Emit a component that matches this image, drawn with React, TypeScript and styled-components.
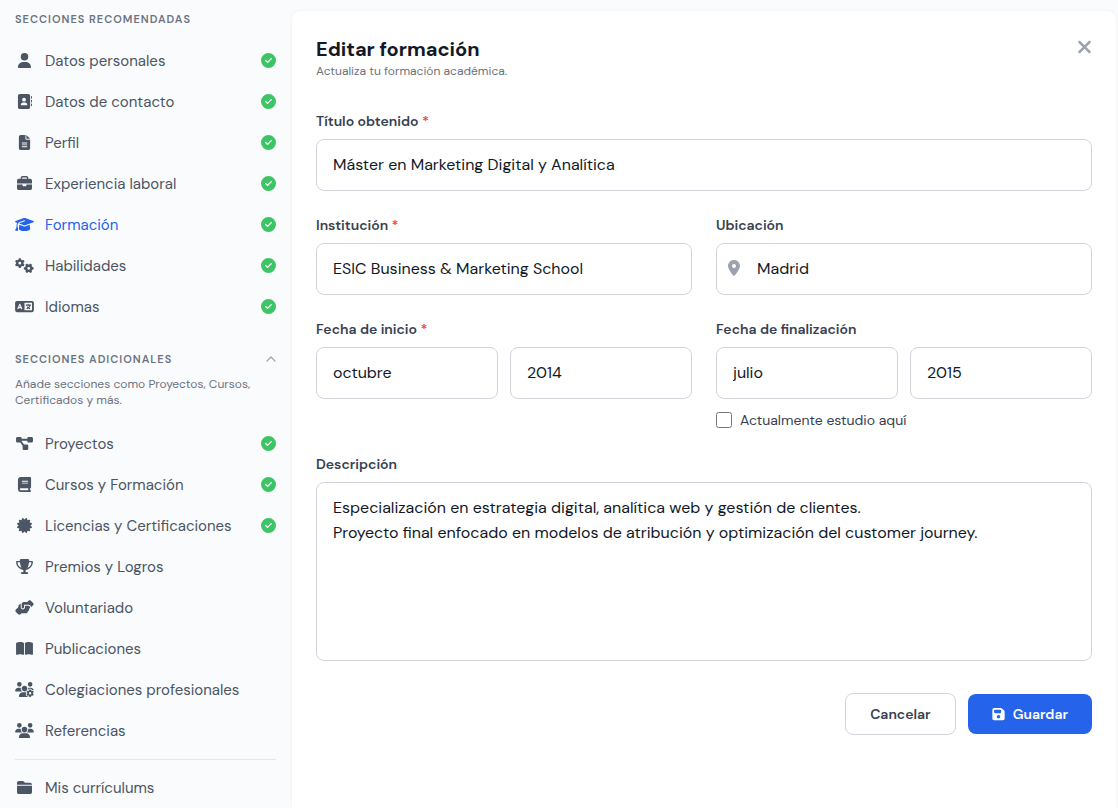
import React, { useState } from "react";
import styled, { createGlobalStyle } from "styled-components";
import type { IconType } from "react-icons";
import {
  FaUser,
  FaAddressBook,
  FaFileLines,
  FaBriefcase,
  FaGraduationCap,
  FaGears,
  FaLanguage,
  FaDiagramProject,
  FaBook,
  FaCertificate,
  FaTrophy,
  FaHandshakeAngle,
  FaBookOpen,
  FaUsersGear,
  FaUsers,
  FaFolderClosed,
  FaCircleCheck,
  FaLocationDot,
  FaXmark,
  FaFloppyDisk,
} from "react-icons/fa6";

const GlobalStyle = createGlobalStyle`
  *, *::before, *::after { box-sizing: border-box; }
  body {
    margin: 0;
    background: #f9fbfd;
    color: #111827;
    font-family: "DM Sans", Inter, "Liberation Sans", sans-serif;
    font-size: 16px;
  }
  button, input, select, textarea { font: inherit; color: inherit; }
`;

const Page = styled.div`
  display: flex;
  align-items: stretch;
  min-height: 100vh;
`;

const Sidebar = styled.nav`
  flex: 0 0 291px;
  padding: 10px 15px 0;
  color: #4b5563;
`;

const SectionTitle = styled.h2`
  margin: 0;
  font-size: 11px;
  line-height: 18px;
  font-weight: 600;
  letter-spacing: 1px;
  text-transform: uppercase;
  color: #6b7280;
`;

const SectionToggle = styled.button`
  display: flex;
  align-items: center;
  justify-content: space-between;
  width: 100%;
  margin-top: 23px;
  padding: 0;
  border: 0;
  background: none;
  color: #9ca3af;
  text-align: left;
  cursor: pointer;
`;

const SectionHint = styled.p`
  margin: 8px 0 0;
  font-size: 12px;
  line-height: 16px;
  color: #6b7280;
`;

const NavList = styled.ul<{ $gap: number }>`
  margin: ${({ $gap }) => $gap}px 0 0;
  padding: 0;
  list-style: none;
`;

const NavLink = styled.a<{ $active?: boolean }>`
  display: flex;
  align-items: center;
  gap: 11px;
  height: 41px;
  color: ${({ $active }) => ($active ? "#2563eb" : "#4b5563")};
  font-size: 15px;
  text-decoration: none;
  white-space: nowrap;
`;

const NavIcon = styled.span`
  display: flex;
  flex: 0 0 19px;

  svg {
    width: 19px;
    height: 15px;
  }
`;

const NavLabel = styled.span`
  flex: 1;
`;

const Divider = styled.hr`
  margin: 8px 0 0;
  border: 0;
  border-top: 1px solid #e5e7eb;
`;

const Main = styled.main`
  display: flex;
  flex: 1;
  min-width: 0;
  padding: 11px 2px 0 1px;
`;

const Card = styled.form`
  flex: 1;
  min-width: 0;
  padding: 24px;
  border-radius: 8px 8px 0 0;
  background: #fff;
  box-shadow: 0 0 2px rgba(15, 23, 42, 0.08);
`;

const CardHeader = styled.header`
  display: flex;
  align-items: flex-start;
  justify-content: space-between;
  margin-bottom: 32px;
`;

const Title = styled.h1`
  margin: 0;
  font-size: 20px;
  line-height: 28px;
  font-weight: 700;
`;

const Subtitle = styled.p`
  margin: 0;
  font-size: 12px;
  line-height: 16px;
  color: #6b7280;
`;

const CloseButton = styled.button`
  display: flex;
  padding: 2px 0;
  border: 0;
  background: none;
  color: #9ca3af;
  cursor: pointer;

  svg {
    width: 15px;
    height: 20px;
  }
`;

const Fields = styled.div`
  display: grid;
  grid-template-columns: 1fr 1fr;
  gap: 24px;
`;

const Field = styled.div<{ $wide?: boolean }>`
  grid-column: ${({ $wide }) => ($wide ? "1 / -1" : "auto")};
  min-width: 0;
`;

const Label = styled.label`
  display: block;
  margin-bottom: 8px;
  font-size: 14px;
  line-height: 20px;
  font-weight: 600;
  color: #374151;
`;

const Required = styled.span`
  color: #ef4444;
`;

const Control = styled.input<{ $withIcon?: boolean }>`
  display: block;
  width: 100%;
  height: 52px;
  padding: 0 16px 2px ${({ $withIcon }) => ($withIcon ? 40 : 16)}px;
  border: 1px solid #d1d5db;
  border-radius: 8px;
  background: #fff;
`;

const SelectControl = styled(Control).attrs({ as: "select" })`
  appearance: none;
`;

const TextArea = styled.textarea`
  display: block;
  width: 100%;
  height: 179px;
  padding: 12px 16px;
  border: 1px solid #d1d5db;
  border-radius: 8px;
  background: #fff;
  line-height: 25px;
  resize: none;
`;

const IconField = styled.div`
  position: relative;
`;

const FieldIcon = styled.span`
  position: absolute;
  top: 0;
  bottom: 2px;
  left: 12px;
  display: flex;
  align-items: center;
  color: #9ca3af;

  svg {
    width: 12px;
    height: 16px;
  }
`;

const DateRow = styled.div`
  display: grid;
  grid-template-columns: 1fr 1fr;
  gap: 12px;
`;

const CheckLabel = styled.label`
  display: flex;
  align-items: center;
  gap: 8px;
  margin-top: 11px;
  font-size: 14px;
  line-height: 20px;
  color: #374151;
`;

const Checkbox = styled.input`
  width: 16px;
  height: 16px;
  margin: 0;
`;

const Actions = styled.footer`
  display: flex;
  align-items: center;
  justify-content: flex-end;
  gap: 12px;
  margin-top: 32px;
`;

const Button = styled.button<{ $primary?: boolean }>`
  display: flex;
  align-items: center;
  gap: 8px;
  padding: 10px 24px;
  border: ${({ $primary }) => ($primary ? "0" : "1px solid #d1d5db")};
  border-radius: 8px;
  background: ${({ $primary }) => ($primary ? "#2563eb" : "#fff")};
  color: ${({ $primary }) => ($primary ? "#fff" : "#374151")};
  font-size: 14px;
  line-height: 20px;
  font-weight: 600;
  cursor: pointer;

  svg {
    width: 13px;
    height: 14px;
  }
`;

type Entry = { label: string; icon: IconType; done?: boolean; active?: boolean };

const recommended: Entry[] = [
  { label: "Datos personales", icon: FaUser, done: true },
  { label: "Datos de contacto", icon: FaAddressBook, done: true },
  { label: "Perfil", icon: FaFileLines, done: true },
  { label: "Experiencia laboral", icon: FaBriefcase, done: true },
  { label: "Formación", icon: FaGraduationCap, done: true, active: true },
  { label: "Habilidades", icon: FaGears, done: true },
  { label: "Idiomas", icon: FaLanguage, done: true },
];

const additional: Entry[] = [
  { label: "Proyectos", icon: FaDiagramProject, done: true },
  { label: "Cursos y Formación", icon: FaBook, done: true },
  { label: "Licencias y Certificaciones", icon: FaCertificate, done: true },
  { label: "Premios y Logros", icon: FaTrophy },
  { label: "Voluntariado", icon: FaHandshakeAngle },
  { label: "Publicaciones", icon: FaBookOpen },
  { label: "Colegiaciones profesionales", icon: FaUsersGear },
  { label: "Referencias", icon: FaUsers },
];

const months = [
  "enero", "febrero", "marzo", "abril", "mayo", "junio",
  "julio", "agosto", "septiembre", "octubre", "noviembre", "diciembre",
];
const years = Array.from({ length: 30 }, (_, i) => String(2025 - i));

function NavItem({ entry }: { entry: Entry }) {
  const Icon = entry.icon;
  return (
    <li>
      <NavLink href="#" $active={entry.active} aria-current={entry.active ? "page" : undefined}>
        <NavIcon>
          <Icon />
        </NavIcon>
        <NavLabel>{entry.label}</NavLabel>
        {entry.done && <FaCircleCheck size={15} color="#3dc464" title="Completado" />}
      </NavLink>
    </li>
  );
}

function Chevron() {
  return (
    <svg width="10" height="6" viewBox="0 0 10 6" fill="none" stroke="currentColor" strokeWidth="1.2" strokeLinecap="round" strokeLinejoin="round" aria-hidden="true">
      <path d="M1 5l4-4 4 4" />
    </svg>
  );
}

function DateSelects({ id, month, year }: { id: string; month: string; year: string }) {
  return (
    <DateRow>
      <SelectControl id={id} defaultValue={month}>
        {months.map((m) => (
          <option key={m}>{m}</option>
        ))}
      </SelectControl>
      <SelectControl aria-label="Año" defaultValue={year}>
        {years.map((y) => (
          <option key={y}>{y}</option>
        ))}
      </SelectControl>
    </DateRow>
  );
}

export default function App() {
  const [open, setOpen] = useState(true);
  return (
    <>
      <GlobalStyle />
      <Page>
        <Sidebar>
          <SectionTitle>Secciones recomendadas</SectionTitle>
          <NavList $gap={12}>
            {recommended.map((e) => (
              <NavItem key={e.label} entry={e} />
            ))}
          </NavList>
          <SectionToggle type="button" aria-expanded={open} onClick={() => setOpen(!open)}>
            <SectionTitle as="span">Secciones adicionales</SectionTitle>
            <Chevron />
          </SectionToggle>
          <SectionHint>Añade secciones como Proyectos, Cursos, Certificados y más.</SectionHint>
          {open && (
            <NavList $gap={15}>
              {additional.map((e) => (
                <NavItem key={e.label} entry={e} />
              ))}
            </NavList>
          )}
          <Divider />
          <NavList $gap={7}>
            <NavItem entry={{ label: "Mis currículums", icon: FaFolderClosed }} />
          </NavList>
        </Sidebar>
        <Main>
          <Card onSubmit={(e: React.FormEvent) => e.preventDefault()}>
            <CardHeader>
              <div>
                <Title>Editar formación</Title>
                <Subtitle>Actualiza tu formación académica.</Subtitle>
              </div>
              <CloseButton type="button" aria-label="Cerrar">
                <FaXmark />
              </CloseButton>
            </CardHeader>
            <Fields>
              <Field $wide>
                <Label htmlFor="titulo">
                  Título obtenido <Required>*</Required>
                </Label>
                <Control id="titulo" defaultValue="Máster en Marketing Digital y Analítica" />
              </Field>
              <Field>
                <Label htmlFor="institucion">
                  Institución <Required>*</Required>
                </Label>
                <Control id="institucion" defaultValue="ESIC Business & Marketing School" />
              </Field>
              <Field>
                <Label htmlFor="ubicacion">Ubicación</Label>
                <IconField>
                  <Control id="ubicacion" $withIcon defaultValue="Madrid" />
                  <FieldIcon>
                    <FaLocationDot />
                  </FieldIcon>
                </IconField>
              </Field>
              <Field>
                <Label htmlFor="inicio">
                  Fecha de inicio <Required>*</Required>
                </Label>
                <DateSelects id="inicio" month="octubre" year="2014" />
              </Field>
              <Field>
                <Label htmlFor="fin">Fecha de finalización</Label>
                <DateSelects id="fin" month="julio" year="2015" />
                <CheckLabel>
                  <Checkbox type="checkbox" />
                  Actualmente estudio aquí
                </CheckLabel>
              </Field>
              <Field $wide>
                <Label htmlFor="descripcion">Descripción</Label>
                <TextArea
                  id="descripcion"
                  defaultValue={
                    "Especialización en estrategia digital, analítica web y gestión de clientes.\nProyecto final enfocado en modelos de atribución y optimización del customer journey."
                  }
                />
              </Field>
            </Fields>
            <Actions>
              <Button type="button">Cancelar</Button>
              <Button type="submit" $primary>
                <FaFloppyDisk />
                Guardar
              </Button>
            </Actions>
          </Card>
        </Main>
      </Page>
    </>
  );
}
